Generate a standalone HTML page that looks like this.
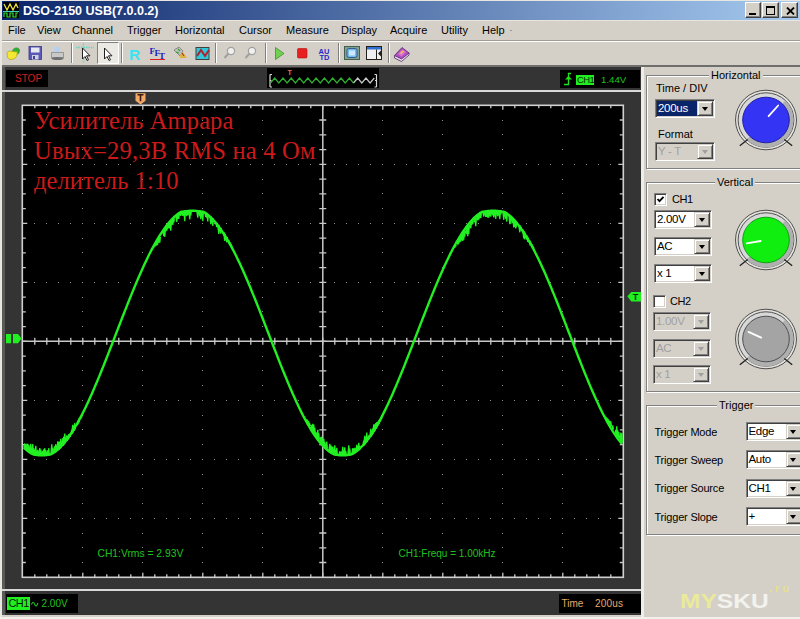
<!DOCTYPE html>
<html><head><meta charset="utf-8">
<style>
*{margin:0;padding:0;box-sizing:border-box}
html,body{width:800px;height:619px;overflow:hidden;background:#d4d0c8;font-family:"Liberation Sans",sans-serif;font-size:11px;color:#000}
.a{position:absolute}
.t{position:absolute;white-space:nowrap;line-height:1}
#title{left:2px;top:1px;width:798px;height:19px;background:linear-gradient(90deg,#0a246a 0%,#a6caf0 100%)}
.tb{position:absolute;top:2px;width:16px;height:16px;background:#d4d0c8;border-top:1px solid #fff;border-left:1px solid #fff;border-right:1px solid #404040;border-bottom:1px solid #404040;box-shadow:inset -1px -1px #808080}
.menu{top:25px;font-size:11px;color:#000}
.sep{position:absolute;top:43px;width:2px;height:20px;border-left:1px solid #808080;border-right:1px solid #fff}
.blk{position:absolute;background:#000}
.combo{position:absolute;height:18px;background:#fff;border-top:1px solid #808080;border-left:1px solid #808080;border-right:1px solid #fff;border-bottom:1px solid #fff;box-shadow:inset 1px 1px #404040,inset -1px -1px #d4d0c8}
.combo .v{position:absolute;left:2px;top:3px;font-size:11.5px;letter-spacing:-0.3px;line-height:11px;white-space:nowrap}
.combo .btn{position:absolute;right:1px;top:1px;width:16px;height:15px;background:#d4d0c8;border-top:1px solid #d4d0c8;border-left:1px solid #d4d0c8;border-right:1px solid #404040;border-bottom:1px solid #404040;box-shadow:inset 1px 1px #fff,inset -1px -1px #808080}
.combo .btn:after{content:"";position:absolute;left:3.5px;top:5px;border-left:3.5px solid transparent;border-right:3.5px solid transparent;border-top:4px solid #000}
.combo.dis{background:#d4d0c8}
.combo.dis .v{color:#a0a0a0}
.combo.dis .btn:after{border-top-color:#a0a0a0}
.grp{position:absolute;border:1px solid #808080;box-shadow:inset 1px 1px #fff,1px 1px #fff}
.grp .gt{position:absolute;top:-7px;background:#d4d0c8;padding:0 2px;font-size:11px;line-height:12px;white-space:nowrap}
.chk{position:absolute;width:13px;height:13px;background:#fff;border-top:1px solid #808080;border-left:1px solid #808080;border-right:1px solid #fff;border-bottom:1px solid #fff;box-shadow:inset 1px 1px #404040,inset -1px -1px #d4d0c8}
</style></head><body>

<!-- window frame -->
<div class="a" style="left:0;top:0;width:800px;height:1px;background:#e8e6e0"></div>
<div class="a" style="left:0;top:0;width:2px;height:619px;background:#e8e6e0"></div>

<!-- title bar -->
<div id="title" class="a"></div>
<svg class="a" style="left:3px;top:2px" width="16" height="16" viewBox="0 0 16 16">
  <rect width="16" height="16" fill="#000"/>
  <polyline points="1,2 4,8 7,2 10,8 13,2 15,6" stroke="#e8e040" stroke-width="1.3" fill="none"/>
  <line x1="0" y1="9.5" x2="16" y2="9.5" stroke="#40d0c0" stroke-width="1"/>
  <polyline points="1,15 1,11 4,11 4,15 7,15 7,11 10,11 10,15 13,15 13,11 15,11" stroke="#30e030" stroke-width="1.2" fill="none"/>
</svg>
<div class="t" style="left:23px;top:5px;font-weight:bold;font-size:12.5px;color:#fff">DSO-2150 USB(7.0.0.2)</div>
<div class="tb" style="left:745px"><div class="a" style="left:3px;top:10px;width:7px;height:2px;background:#000"></div></div>
<div class="tb" style="left:762px;width:17px"><div class="a" style="left:3px;top:3px;width:9px;height:9px;border:1px solid #000;border-top-width:2px"></div></div>
<div class="tb" style="left:781px;width:17px"><svg class="a" style="left:4px;top:4px" width="9" height="8"><path d="M1 0.5L8 7.5M8 0.5L1 7.5" stroke="#000" stroke-width="1.8"/></svg></div>

<!-- menu -->
<div class="a" style="left:2px;top:20px;width:798px;height:1px;background:#e8e6e0"></div>
<div class="t menu" style="left:8px">File</div>
<div class="t menu" style="left:37px">View</div>
<div class="t menu" style="left:72px">Channel</div>
<div class="t menu" style="left:127px">Trigger</div>
<div class="t menu" style="left:175px">Horizontal</div>
<div class="t menu" style="left:239px">Cursor</div>
<div class="t menu" style="left:286px">Measure</div>
<div class="t menu" style="left:341px">Display</div>
<div class="t menu" style="left:390px">Acquire</div>
<div class="t menu" style="left:441px">Utility</div>
<div class="t menu" style="left:482px">Help</div>
<div class="a" style="left:510px;top:30px;width:2px;height:1px;background:#9a9890"></div>
<div class="a" style="left:2px;top:40px;width:798px;height:1px;background:#a09c94"></div>
<div class="a" style="left:2px;top:41px;width:798px;height:1px;background:#fff"></div>

<!-- toolbar -->
<div id="toolbar">
<div class="sep" style="left:71px"></div>
<div class="sep" style="left:121px"></div>
<div class="sep" style="left:215px"></div>
<div class="sep" style="left:265px"></div>
<div class="sep" style="left:338px"></div>
<div class="sep" style="left:388px"></div>
<!-- pressed button -->
<div class="a" style="left:97px;top:42px;width:22px;height:22px;border-top:1px solid #808080;border-left:1px solid #808080;border-right:1px solid #fff;border-bottom:1px solid #fff;background:#ebe9e4"></div>
<svg class="a" style="left:0;top:42px" width="420" height="22" viewBox="0 42 420 22">
  <!-- open folder -->
  <path d="M12.5 50.5c1.5-3 5-3.5 7-1l-0.5 3.5-4 2.5z" fill="#30b030" stroke="#208020" stroke-width="0.6"/>
  <path d="M7 52.5l2.5-1.5 3 .5 5 0.5-1 4.5-2.5 2.5-4 .5-2.5-2z" fill="#f4e830" stroke="#b0a010" stroke-width="0.7"/>
  <!-- save -->
  <rect x="29" y="46.5" width="12.5" height="13" fill="#5a58b8" stroke="#383880" stroke-width="0.8"/>
  <rect x="31" y="47.5" width="8.5" height="5" fill="#e8e8f0"/>
  <rect x="32" y="55" width="6.5" height="4.5" fill="#d0d0e0"/>
  <rect x="33" y="56" width="2" height="3" fill="#4040a0"/>
  <!-- print -->
  <path d="M54 47h6v5h-6z" fill="#b8d0f0"/>
  <path d="M51.5 52.5h12v5.5h-12z" fill="#c8c8c8" stroke="#808080" stroke-width="0.7"/>
  <ellipse cx="57.5" cy="58.5" rx="6" ry="1.6" fill="#707070"/>
  <!-- cursor w/ cross -->
  <path d="M76 47.5h18M83.5 43.5v19" stroke="#60d8c0" stroke-width="1.4" stroke-dasharray="1.5 1"/>
  <path d="M82.5 48v11l2.5-2.5 2 4 1.5-.7-2-4h3.5z" fill="#fff" stroke="#202020" stroke-width="1"/>
  <!-- cursor -->
  <path d="M104.5 48v11l2.5-2.5 2 4 1.5-.7-2-4h3.5z" fill="#fff" stroke="#202020" stroke-width="1"/>
  <!-- R -->
  <text x="129" y="59.7" font-family="Liberation Sans" font-weight="bold" font-size="15.5" fill="#38e4f4">R</text>
  <!-- FFT -->
  <text x="149.5" y="53.5" font-family="Liberation Serif" font-weight="bold" font-size="9" fill="#2020c0">F</text>
  <text x="154.5" y="56" font-family="Liberation Serif" font-weight="bold" font-size="9" fill="#2020c0">F</text>
  <text x="159" y="58.5" font-family="Liberation Serif" font-weight="bold" font-size="9" fill="#2020c0">T</text>
  <path d="M150 59.5h15" stroke="#e02020" stroke-width="1"/>
  <!-- mixed icon -->
  <path d="M174 50l5-3 4 4-3 5z" fill="#c0c0c0" stroke="#606060" stroke-width="0.6"/>
  <path d="M176 52l3 1M178 49l2 2" stroke="#30a030" stroke-width="1.2"/>
  <path d="M180 55l3-3 4 6h-7z" fill="#e0b040"/>
  <path d="M182 53l2 3" stroke="#a02020" stroke-width="1"/>
  <!-- cyan red square -->
  <rect x="196" y="47.5" width="13" height="12" fill="#30c8d8" stroke="#404040" stroke-width="1"/>
  <path d="M197 56l4-6 4 6 4-6" stroke="#b02030" stroke-width="2" fill="none"/>
  <!-- magnifiers -->
  <circle cx="231" cy="51" r="3.6" fill="#f0f0f0" stroke="#a0a0a0" stroke-width="1.2"/>
  <path d="M228.5 53.5l-4 4.5" stroke="#a0a0a0" stroke-width="2"/>
  <circle cx="252" cy="51" r="3.6" fill="#f0f0f0" stroke="#a0a0a0" stroke-width="1.2"/>
  <path d="M249.5 53.5l-4 4.5" stroke="#a0a0a0" stroke-width="2"/>
  <!-- play -->
  <path d="M275.5 47.5l8.5 6-8.5 6z" fill="#70d050" stroke="#409030" stroke-width="0.8"/>
  <!-- stop -->
  <rect x="297.5" y="48.5" width="9.5" height="9.5" rx="1" fill="#e82020" stroke="#b01010" stroke-width="0.6"/>
  <!-- AUTO -->
  <text x="318.5" y="53.5" font-family="Liberation Sans" font-weight="bold" font-size="7.5" fill="#2828c8">AU</text>
  <text x="319.5" y="60" font-family="Liberation Sans" font-weight="bold" font-size="7.5" fill="#2828c8">TD</text>
  <!-- screen -->
  <rect x="344.5" y="46.5" width="15" height="13" fill="#80a090" stroke="#406050" stroke-width="1"/>
  <rect x="347" y="48.5" width="10" height="9" rx="2" fill="#70c0f0" stroke="#304080" stroke-width="0.8"/>
  <rect x="349" y="50.5" width="6" height="5" fill="#d0e8ff"/>
  <!-- window -->
  <rect x="366.5" y="46.5" width="15" height="13" fill="#f0f0f0" stroke="#202020" stroke-width="1"/>
  <rect x="367" y="47" width="14" height="2.5" fill="#3070d0"/>
  <path d="M381 50.5l-3 3 3 3z" fill="#202020"/>
  <path d="M376.5 49.5v10" stroke="#202020" stroke-width="1"/>
  <!-- book -->
  <path d="M394.5 55.5v2.5l7 3.5 7.5-6.5v-2.5" fill="#e8d8f0" stroke="#502868" stroke-width="0.8"/>
  <path d="M394.5 55.5l7.5-8 7 5.5-7.5 6z" fill="#b050c0" stroke="#502868" stroke-width="0.8"/>
  <path d="M398 54l4.5-4.5 3.5 2.5-4.5 4.5z" fill="#e070d0"/>
  <path d="M400.5 53.5l3-2.5" stroke="#f0d040" stroke-width="1.3"/>
</svg>

</div>

<!-- dark scope area -->
<div class="a" style="left:2px;top:65px;width:639px;height:550px;background:#343434;border-left:3px solid #5a5a58"></div>
<!-- top black boxes -->
<div class="blk" style="left:6px;top:70px;width:42px;height:17px"></div>
<div class="t" style="left:15px;top:74px;font-size:10px;color:#d42020">STOP</div>
<div class="blk" style="left:267px;top:68px;width:112px;height:20px"></div>
<svg class="a" style="left:267px;top:68px" width="112" height="20">
  <path d="M3 6.5v12.5M3 6.5h2M3 19h2M3 12.5h1.5M109.5 6.5v12.5M109.5 6.5h-2M109.5 19h-2M109.5 12.5h-1.5" stroke="#d8d8d8" stroke-width="1.2" fill="none"/>
  <polyline points="3.5,15 7.7,10 11.8,15 16.0,10 20.1,15 24.2,10 28.4,15 32.5,10 36.7,15 40.8,10 45.0,15 49.1,10 53.3,15 57.4,10 61.6,15 65.7,10 69.9,15 74.0,10 78.2,15 82.4,10 86.5,15" stroke="#30b030" stroke-width="1.2" fill="none"/>
  <polyline points="86.5,15 90.7,10 94.8,15 99.0,10 103.1,15 107.3,10" stroke="#c8c8c8" stroke-width="1.2" fill="none"/>
  <text x="20.5" y="7" font-size="7" font-weight="bold" fill="#e07848" font-family="Liberation Sans">T</text>
</svg>
<div class="blk" style="left:560px;top:70px;width:80px;height:18px"></div>
<svg class="a" style="left:563px;top:72px" width="10" height="15"><path d="M1 12.5h4.5V1.5h2.5" stroke="#20e020" stroke-width="1.3" fill="none"/><path d="M2 7.5h7l-3.5-3.5z" fill="#20e020"/></svg>
<div class="a" style="left:576px;top:75px;width:18px;height:10px;background:#20f020"></div>
<div class="t" style="left:577px;top:75px;font-size:9.5px;letter-spacing:-0.6px;color:#083008">CH1</div>
<div class="t" style="left:601px;top:74.5px;font-size:9.7px;color:#20c020">1.44V</div>
<!-- separators -->
<div class="a" style="left:2px;top:90px;width:639px;height:2px;background:#d8d8d8"></div>
<div class="a" style="left:2px;top:589px;width:639px;height:2px;background:#d8d8d8"></div>
<!-- trigger pos marker -->
<svg class="a" style="left:135px;top:93px" width="11" height="12"><path d="M0.5 0.3h10v7.5l-5 3.7l-5-3.7z" fill="#f4a868"/><path d="M2.5 1.8h6M5.5 1.8v6.5" stroke="#3a1a10" stroke-width="1.6"/></svg>

<svg width="800" height="619" style="position:absolute;left:0;top:0"><rect x="22.8" y="105.3" width="600" height="472" fill="#000"/><path d="M82 120h1v1h-1zM82 134h1v1h-1zM82 149h1v1h-1zM82 164h1v1h-1zM82 179h1v1h-1zM82 193h1v1h-1zM82 208h1v1h-1zM82 223h1v1h-1zM82 238h1v1h-1zM82 252h1v1h-1zM82 267h1v1h-1zM82 282h1v1h-1zM82 297h1v1h-1zM82 311h1v1h-1zM82 326h1v1h-1zM82 356h1v1h-1zM82 370h1v1h-1zM82 385h1v1h-1zM82 400h1v1h-1zM82 415h1v1h-1zM82 429h1v1h-1zM82 444h1v1h-1zM82 459h1v1h-1zM82 474h1v1h-1zM82 488h1v1h-1zM82 503h1v1h-1zM82 518h1v1h-1zM82 533h1v1h-1zM82 547h1v1h-1zM82 562h1v1h-1zM142 120h1v1h-1zM142 134h1v1h-1zM142 149h1v1h-1zM142 164h1v1h-1zM142 179h1v1h-1zM142 193h1v1h-1zM142 208h1v1h-1zM142 223h1v1h-1zM142 238h1v1h-1zM142 252h1v1h-1zM142 267h1v1h-1zM142 282h1v1h-1zM142 297h1v1h-1zM142 311h1v1h-1zM142 326h1v1h-1zM142 356h1v1h-1zM142 370h1v1h-1zM142 385h1v1h-1zM142 400h1v1h-1zM142 415h1v1h-1zM142 429h1v1h-1zM142 444h1v1h-1zM142 459h1v1h-1zM142 474h1v1h-1zM142 488h1v1h-1zM142 503h1v1h-1zM142 518h1v1h-1zM142 533h1v1h-1zM142 547h1v1h-1zM142 562h1v1h-1zM202 120h1v1h-1zM202 134h1v1h-1zM202 149h1v1h-1zM202 164h1v1h-1zM202 179h1v1h-1zM202 193h1v1h-1zM202 208h1v1h-1zM202 223h1v1h-1zM202 238h1v1h-1zM202 252h1v1h-1zM202 267h1v1h-1zM202 282h1v1h-1zM202 297h1v1h-1zM202 311h1v1h-1zM202 326h1v1h-1zM202 356h1v1h-1zM202 370h1v1h-1zM202 385h1v1h-1zM202 400h1v1h-1zM202 415h1v1h-1zM202 429h1v1h-1zM202 444h1v1h-1zM202 459h1v1h-1zM202 474h1v1h-1zM202 488h1v1h-1zM202 503h1v1h-1zM202 518h1v1h-1zM202 533h1v1h-1zM202 547h1v1h-1zM202 562h1v1h-1zM262 120h1v1h-1zM262 134h1v1h-1zM262 149h1v1h-1zM262 164h1v1h-1zM262 179h1v1h-1zM262 193h1v1h-1zM262 208h1v1h-1zM262 223h1v1h-1zM262 238h1v1h-1zM262 252h1v1h-1zM262 267h1v1h-1zM262 282h1v1h-1zM262 297h1v1h-1zM262 311h1v1h-1zM262 326h1v1h-1zM262 356h1v1h-1zM262 370h1v1h-1zM262 385h1v1h-1zM262 400h1v1h-1zM262 415h1v1h-1zM262 429h1v1h-1zM262 444h1v1h-1zM262 459h1v1h-1zM262 474h1v1h-1zM262 488h1v1h-1zM262 503h1v1h-1zM262 518h1v1h-1zM262 533h1v1h-1zM262 547h1v1h-1zM262 562h1v1h-1zM382 120h1v1h-1zM382 134h1v1h-1zM382 149h1v1h-1zM382 164h1v1h-1zM382 179h1v1h-1zM382 193h1v1h-1zM382 208h1v1h-1zM382 223h1v1h-1zM382 238h1v1h-1zM382 252h1v1h-1zM382 267h1v1h-1zM382 282h1v1h-1zM382 297h1v1h-1zM382 311h1v1h-1zM382 326h1v1h-1zM382 356h1v1h-1zM382 370h1v1h-1zM382 385h1v1h-1zM382 400h1v1h-1zM382 415h1v1h-1zM382 429h1v1h-1zM382 444h1v1h-1zM382 459h1v1h-1zM382 474h1v1h-1zM382 488h1v1h-1zM382 503h1v1h-1zM382 518h1v1h-1zM382 533h1v1h-1zM382 547h1v1h-1zM382 562h1v1h-1zM442 120h1v1h-1zM442 134h1v1h-1zM442 149h1v1h-1zM442 164h1v1h-1zM442 179h1v1h-1zM442 193h1v1h-1zM442 208h1v1h-1zM442 223h1v1h-1zM442 238h1v1h-1zM442 252h1v1h-1zM442 267h1v1h-1zM442 282h1v1h-1zM442 297h1v1h-1zM442 311h1v1h-1zM442 326h1v1h-1zM442 356h1v1h-1zM442 370h1v1h-1zM442 385h1v1h-1zM442 400h1v1h-1zM442 415h1v1h-1zM442 429h1v1h-1zM442 444h1v1h-1zM442 459h1v1h-1zM442 474h1v1h-1zM442 488h1v1h-1zM442 503h1v1h-1zM442 518h1v1h-1zM442 533h1v1h-1zM442 547h1v1h-1zM442 562h1v1h-1zM502 120h1v1h-1zM502 134h1v1h-1zM502 149h1v1h-1zM502 164h1v1h-1zM502 179h1v1h-1zM502 193h1v1h-1zM502 208h1v1h-1zM502 223h1v1h-1zM502 238h1v1h-1zM502 252h1v1h-1zM502 267h1v1h-1zM502 282h1v1h-1zM502 297h1v1h-1zM502 311h1v1h-1zM502 326h1v1h-1zM502 356h1v1h-1zM502 370h1v1h-1zM502 385h1v1h-1zM502 400h1v1h-1zM502 415h1v1h-1zM502 429h1v1h-1zM502 444h1v1h-1zM502 459h1v1h-1zM502 474h1v1h-1zM502 488h1v1h-1zM502 503h1v1h-1zM502 518h1v1h-1zM502 533h1v1h-1zM502 547h1v1h-1zM502 562h1v1h-1zM562 120h1v1h-1zM562 134h1v1h-1zM562 149h1v1h-1zM562 164h1v1h-1zM562 179h1v1h-1zM562 193h1v1h-1zM562 208h1v1h-1zM562 223h1v1h-1zM562 238h1v1h-1zM562 252h1v1h-1zM562 267h1v1h-1zM562 282h1v1h-1zM562 297h1v1h-1zM562 311h1v1h-1zM562 326h1v1h-1zM562 356h1v1h-1zM562 370h1v1h-1zM562 385h1v1h-1zM562 400h1v1h-1zM562 415h1v1h-1zM562 429h1v1h-1zM562 444h1v1h-1zM562 459h1v1h-1zM562 474h1v1h-1zM562 488h1v1h-1zM562 503h1v1h-1zM562 518h1v1h-1zM562 533h1v1h-1zM562 547h1v1h-1zM562 562h1v1h-1zM34 164h1v1h-1zM46 164h1v1h-1zM58 164h1v1h-1zM70 164h1v1h-1zM82 164h1v1h-1zM94 164h1v1h-1zM106 164h1v1h-1zM118 164h1v1h-1zM130 164h1v1h-1zM142 164h1v1h-1zM154 164h1v1h-1zM166 164h1v1h-1zM178 164h1v1h-1zM190 164h1v1h-1zM202 164h1v1h-1zM214 164h1v1h-1zM226 164h1v1h-1zM238 164h1v1h-1zM250 164h1v1h-1zM262 164h1v1h-1zM274 164h1v1h-1zM286 164h1v1h-1zM298 164h1v1h-1zM310 164h1v1h-1zM334 164h1v1h-1zM346 164h1v1h-1zM358 164h1v1h-1zM370 164h1v1h-1zM382 164h1v1h-1zM394 164h1v1h-1zM406 164h1v1h-1zM418 164h1v1h-1zM430 164h1v1h-1zM442 164h1v1h-1zM454 164h1v1h-1zM466 164h1v1h-1zM478 164h1v1h-1zM490 164h1v1h-1zM502 164h1v1h-1zM514 164h1v1h-1zM526 164h1v1h-1zM538 164h1v1h-1zM550 164h1v1h-1zM562 164h1v1h-1zM574 164h1v1h-1zM586 164h1v1h-1zM598 164h1v1h-1zM610 164h1v1h-1zM34 223h1v1h-1zM46 223h1v1h-1zM58 223h1v1h-1zM70 223h1v1h-1zM82 223h1v1h-1zM94 223h1v1h-1zM106 223h1v1h-1zM118 223h1v1h-1zM130 223h1v1h-1zM142 223h1v1h-1zM154 223h1v1h-1zM166 223h1v1h-1zM178 223h1v1h-1zM190 223h1v1h-1zM202 223h1v1h-1zM214 223h1v1h-1zM226 223h1v1h-1zM238 223h1v1h-1zM250 223h1v1h-1zM262 223h1v1h-1zM274 223h1v1h-1zM286 223h1v1h-1zM298 223h1v1h-1zM310 223h1v1h-1zM334 223h1v1h-1zM346 223h1v1h-1zM358 223h1v1h-1zM370 223h1v1h-1zM382 223h1v1h-1zM394 223h1v1h-1zM406 223h1v1h-1zM418 223h1v1h-1zM430 223h1v1h-1zM442 223h1v1h-1zM454 223h1v1h-1zM466 223h1v1h-1zM478 223h1v1h-1zM490 223h1v1h-1zM502 223h1v1h-1zM514 223h1v1h-1zM526 223h1v1h-1zM538 223h1v1h-1zM550 223h1v1h-1zM562 223h1v1h-1zM574 223h1v1h-1zM586 223h1v1h-1zM598 223h1v1h-1zM610 223h1v1h-1zM34 282h1v1h-1zM46 282h1v1h-1zM58 282h1v1h-1zM70 282h1v1h-1zM82 282h1v1h-1zM94 282h1v1h-1zM106 282h1v1h-1zM118 282h1v1h-1zM130 282h1v1h-1zM142 282h1v1h-1zM154 282h1v1h-1zM166 282h1v1h-1zM178 282h1v1h-1zM190 282h1v1h-1zM202 282h1v1h-1zM214 282h1v1h-1zM226 282h1v1h-1zM238 282h1v1h-1zM250 282h1v1h-1zM262 282h1v1h-1zM274 282h1v1h-1zM286 282h1v1h-1zM298 282h1v1h-1zM310 282h1v1h-1zM334 282h1v1h-1zM346 282h1v1h-1zM358 282h1v1h-1zM370 282h1v1h-1zM382 282h1v1h-1zM394 282h1v1h-1zM406 282h1v1h-1zM418 282h1v1h-1zM430 282h1v1h-1zM442 282h1v1h-1zM454 282h1v1h-1zM466 282h1v1h-1zM478 282h1v1h-1zM490 282h1v1h-1zM502 282h1v1h-1zM514 282h1v1h-1zM526 282h1v1h-1zM538 282h1v1h-1zM550 282h1v1h-1zM562 282h1v1h-1zM574 282h1v1h-1zM586 282h1v1h-1zM598 282h1v1h-1zM610 282h1v1h-1zM34 400h1v1h-1zM46 400h1v1h-1zM58 400h1v1h-1zM70 400h1v1h-1zM82 400h1v1h-1zM94 400h1v1h-1zM106 400h1v1h-1zM118 400h1v1h-1zM130 400h1v1h-1zM142 400h1v1h-1zM154 400h1v1h-1zM166 400h1v1h-1zM178 400h1v1h-1zM190 400h1v1h-1zM202 400h1v1h-1zM214 400h1v1h-1zM226 400h1v1h-1zM238 400h1v1h-1zM250 400h1v1h-1zM262 400h1v1h-1zM274 400h1v1h-1zM286 400h1v1h-1zM298 400h1v1h-1zM310 400h1v1h-1zM334 400h1v1h-1zM346 400h1v1h-1zM358 400h1v1h-1zM370 400h1v1h-1zM382 400h1v1h-1zM394 400h1v1h-1zM406 400h1v1h-1zM418 400h1v1h-1zM430 400h1v1h-1zM442 400h1v1h-1zM454 400h1v1h-1zM466 400h1v1h-1zM478 400h1v1h-1zM490 400h1v1h-1zM502 400h1v1h-1zM514 400h1v1h-1zM526 400h1v1h-1zM538 400h1v1h-1zM550 400h1v1h-1zM562 400h1v1h-1zM574 400h1v1h-1zM586 400h1v1h-1zM598 400h1v1h-1zM610 400h1v1h-1zM34 459h1v1h-1zM46 459h1v1h-1zM58 459h1v1h-1zM70 459h1v1h-1zM82 459h1v1h-1zM94 459h1v1h-1zM106 459h1v1h-1zM118 459h1v1h-1zM130 459h1v1h-1zM142 459h1v1h-1zM154 459h1v1h-1zM166 459h1v1h-1zM178 459h1v1h-1zM190 459h1v1h-1zM202 459h1v1h-1zM214 459h1v1h-1zM226 459h1v1h-1zM238 459h1v1h-1zM250 459h1v1h-1zM262 459h1v1h-1zM274 459h1v1h-1zM286 459h1v1h-1zM298 459h1v1h-1zM310 459h1v1h-1zM334 459h1v1h-1zM346 459h1v1h-1zM358 459h1v1h-1zM370 459h1v1h-1zM382 459h1v1h-1zM394 459h1v1h-1zM406 459h1v1h-1zM418 459h1v1h-1zM430 459h1v1h-1zM442 459h1v1h-1zM454 459h1v1h-1zM466 459h1v1h-1zM478 459h1v1h-1zM490 459h1v1h-1zM502 459h1v1h-1zM514 459h1v1h-1zM526 459h1v1h-1zM538 459h1v1h-1zM550 459h1v1h-1zM562 459h1v1h-1zM574 459h1v1h-1zM586 459h1v1h-1zM598 459h1v1h-1zM610 459h1v1h-1zM34 518h1v1h-1zM46 518h1v1h-1zM58 518h1v1h-1zM70 518h1v1h-1zM82 518h1v1h-1zM94 518h1v1h-1zM106 518h1v1h-1zM118 518h1v1h-1zM130 518h1v1h-1zM142 518h1v1h-1zM154 518h1v1h-1zM166 518h1v1h-1zM178 518h1v1h-1zM190 518h1v1h-1zM202 518h1v1h-1zM214 518h1v1h-1zM226 518h1v1h-1zM238 518h1v1h-1zM250 518h1v1h-1zM262 518h1v1h-1zM274 518h1v1h-1zM286 518h1v1h-1zM298 518h1v1h-1zM310 518h1v1h-1zM334 518h1v1h-1zM346 518h1v1h-1zM358 518h1v1h-1zM370 518h1v1h-1zM382 518h1v1h-1zM394 518h1v1h-1zM406 518h1v1h-1zM418 518h1v1h-1zM430 518h1v1h-1zM442 518h1v1h-1zM454 518h1v1h-1zM466 518h1v1h-1zM478 518h1v1h-1zM490 518h1v1h-1zM502 518h1v1h-1zM514 518h1v1h-1zM526 518h1v1h-1zM538 518h1v1h-1zM550 518h1v1h-1zM562 518h1v1h-1zM574 518h1v1h-1zM586 518h1v1h-1zM598 518h1v1h-1zM610 518h1v1h-1z" fill="#8c8c8c"/><path d="M34.8 105.3v3.0M34.8 577.3v-3.0M34.8 337.8v7M46.8 105.3v3.0M46.8 577.3v-3.0M46.8 337.8v7M58.8 105.3v3.0M58.8 577.3v-3.0M58.8 337.8v7M70.8 105.3v3.0M70.8 577.3v-3.0M70.8 337.8v7M82.8 105.3v4.5M82.8 577.3v-4.5M82.8 337.8v7M94.8 105.3v3.0M94.8 577.3v-3.0M94.8 337.8v7M106.8 105.3v3.0M106.8 577.3v-3.0M106.8 337.8v7M118.8 105.3v3.0M118.8 577.3v-3.0M118.8 337.8v7M130.8 105.3v3.0M130.8 577.3v-3.0M130.8 337.8v7M142.8 105.3v4.5M142.8 577.3v-4.5M142.8 337.8v7M154.8 105.3v3.0M154.8 577.3v-3.0M154.8 337.8v7M166.8 105.3v3.0M166.8 577.3v-3.0M166.8 337.8v7M178.8 105.3v3.0M178.8 577.3v-3.0M178.8 337.8v7M190.8 105.3v3.0M190.8 577.3v-3.0M190.8 337.8v7M202.8 105.3v4.5M202.8 577.3v-4.5M202.8 337.8v7M214.8 105.3v3.0M214.8 577.3v-3.0M214.8 337.8v7M226.8 105.3v3.0M226.8 577.3v-3.0M226.8 337.8v7M238.8 105.3v3.0M238.8 577.3v-3.0M238.8 337.8v7M250.8 105.3v3.0M250.8 577.3v-3.0M250.8 337.8v7M262.8 105.3v4.5M262.8 577.3v-4.5M262.8 337.8v7M274.8 105.3v3.0M274.8 577.3v-3.0M274.8 337.8v7M286.8 105.3v3.0M286.8 577.3v-3.0M286.8 337.8v7M298.8 105.3v3.0M298.8 577.3v-3.0M298.8 337.8v7M310.8 105.3v3.0M310.8 577.3v-3.0M310.8 337.8v7M322.8 105.3v4.5M322.8 577.3v-4.5M322.8 337.8v7M334.8 105.3v3.0M334.8 577.3v-3.0M334.8 337.8v7M346.8 105.3v3.0M346.8 577.3v-3.0M346.8 337.8v7M358.8 105.3v3.0M358.8 577.3v-3.0M358.8 337.8v7M370.8 105.3v3.0M370.8 577.3v-3.0M370.8 337.8v7M382.8 105.3v4.5M382.8 577.3v-4.5M382.8 337.8v7M394.8 105.3v3.0M394.8 577.3v-3.0M394.8 337.8v7M406.8 105.3v3.0M406.8 577.3v-3.0M406.8 337.8v7M418.8 105.3v3.0M418.8 577.3v-3.0M418.8 337.8v7M430.8 105.3v3.0M430.8 577.3v-3.0M430.8 337.8v7M442.8 105.3v4.5M442.8 577.3v-4.5M442.8 337.8v7M454.8 105.3v3.0M454.8 577.3v-3.0M454.8 337.8v7M466.8 105.3v3.0M466.8 577.3v-3.0M466.8 337.8v7M478.8 105.3v3.0M478.8 577.3v-3.0M478.8 337.8v7M490.8 105.3v3.0M490.8 577.3v-3.0M490.8 337.8v7M502.8 105.3v4.5M502.8 577.3v-4.5M502.8 337.8v7M514.8 105.3v3.0M514.8 577.3v-3.0M514.8 337.8v7M526.8 105.3v3.0M526.8 577.3v-3.0M526.8 337.8v7M538.8 105.3v3.0M538.8 577.3v-3.0M538.8 337.8v7M550.8 105.3v3.0M550.8 577.3v-3.0M550.8 337.8v7M562.8 105.3v4.5M562.8 577.3v-4.5M562.8 337.8v7M574.8 105.3v3.0M574.8 577.3v-3.0M574.8 337.8v7M586.8 105.3v3.0M586.8 577.3v-3.0M586.8 337.8v7M598.8 105.3v3.0M598.8 577.3v-3.0M598.8 337.8v7M610.8 105.3v3.0M610.8 577.3v-3.0M610.8 337.8v7M22.8 120.0h3.0M622.8 120.0h-3.0M319.3 120.0h7M22.8 134.8h3.0M622.8 134.8h-3.0M319.3 134.8h7M22.8 149.6h3.0M622.8 149.6h-3.0M319.3 149.6h7M22.8 164.3h4.5M622.8 164.3h-4.5M319.3 164.3h7M22.8 179.1h3.0M622.8 179.1h-3.0M319.3 179.1h7M22.8 193.8h3.0M622.8 193.8h-3.0M319.3 193.8h7M22.8 208.6h3.0M622.8 208.6h-3.0M319.3 208.6h7M22.8 223.3h4.5M622.8 223.3h-4.5M319.3 223.3h7M22.8 238.1h3.0M622.8 238.1h-3.0M319.3 238.1h7M22.8 252.8h3.0M622.8 252.8h-3.0M319.3 252.8h7M22.8 267.6h3.0M622.8 267.6h-3.0M319.3 267.6h7M22.8 282.3h4.5M622.8 282.3h-4.5M319.3 282.3h7M22.8 297.1h3.0M622.8 297.1h-3.0M319.3 297.1h7M22.8 311.8h3.0M622.8 311.8h-3.0M319.3 311.8h7M22.8 326.6h3.0M622.8 326.6h-3.0M319.3 326.6h7M22.8 341.3h4.5M622.8 341.3h-4.5M319.3 341.3h7M22.8 356.1h3.0M622.8 356.1h-3.0M319.3 356.1h7M22.8 370.8h3.0M622.8 370.8h-3.0M319.3 370.8h7M22.8 385.6h3.0M622.8 385.6h-3.0M319.3 385.6h7M22.8 400.3h4.5M622.8 400.3h-4.5M319.3 400.3h7M22.8 415.1h3.0M622.8 415.1h-3.0M319.3 415.1h7M22.8 429.8h3.0M622.8 429.8h-3.0M319.3 429.8h7M22.8 444.6h3.0M622.8 444.6h-3.0M319.3 444.6h7M22.8 459.3h4.5M622.8 459.3h-4.5M319.3 459.3h7M22.8 474.1h3.0M622.8 474.1h-3.0M319.3 474.1h7M22.8 488.8h3.0M622.8 488.8h-3.0M319.3 488.8h7M22.8 503.6h3.0M622.8 503.6h-3.0M319.3 503.6h7M22.8 518.3h4.5M622.8 518.3h-4.5M319.3 518.3h7M22.8 533.0h3.0M622.8 533.0h-3.0M319.3 533.0h7M22.8 547.8h3.0M622.8 547.8h-3.0M319.3 547.8h7M22.8 562.5h3.0M622.8 562.5h-3.0M319.3 562.5h7" stroke="#c8c8c8" stroke-width="1.3" fill="none"/><path d="M22.8 341.3H622.8M322.8 105.3V577.3" stroke="#c8c8c8" stroke-width="1.5" fill="none"/><rect x="22.3" y="105.3" width="601.0" height="471.99999999999994" stroke="#d0d0d0" stroke-width="1.6" fill="none"/><polyline points="23.8,447.5 24.8,448.5 25.8,449.4 26.8,450.2 27.8,451.0 28.8,451.8 29.8,452.5 30.8,453.1 31.8,453.7 32.8,454.2 33.8,454.6 34.8,454.7 35.8,454.9 36.8,455.0 37.8,455.1 38.8,455.2 39.8,455.3 40.8,455.3 41.8,455.3 42.8,455.3 43.8,455.3 44.8,455.2 45.8,455.1 46.8,455.0 47.8,454.9 48.8,454.8 49.8,454.6 50.8,454.3 51.8,453.8 52.8,453.2 53.8,452.6 54.8,451.9 55.8,451.2 56.8,450.4 57.8,449.6 58.8,448.7 59.8,447.7 60.8,446.7 61.8,445.7 62.8,444.6 63.8,443.4 64.8,442.2 65.8,441.0 66.8,439.7 67.8,438.4 68.8,437.0 69.8,435.5 70.8,434.1 71.8,432.5 72.8,431.0 73.8,429.4 74.8,427.7 75.8,426.0 76.8,424.3 77.8,422.5 78.8,420.7 79.8,418.8 80.8,416.9 81.8,415.0 82.8,413.0 83.8,411.0 84.8,409.0 85.8,406.9 86.8,404.8 87.8,402.7 88.8,400.5 89.8,398.3 90.8,396.1 91.8,393.9 92.8,391.6 93.8,389.3 94.8,386.9 95.8,384.6 96.8,382.2 97.8,379.8 98.8,377.4 99.8,375.0 100.8,372.5 101.8,370.0 102.8,367.6 103.8,365.1 104.8,362.5 105.8,360.0 106.8,357.5 107.8,354.9 108.8,352.4 109.8,349.8 110.8,347.2 111.8,344.7 112.8,342.1 113.8,339.5 114.8,336.9 115.8,334.3 116.8,331.7 117.8,329.1 118.8,326.5 119.8,324.0 120.8,321.4 121.8,318.8 122.8,316.2 123.8,313.7 124.8,311.1 125.8,308.6 126.8,306.1 127.8,303.5 128.8,301.0 129.8,298.5 130.8,296.1 131.8,293.6 132.8,291.2 133.8,288.8 134.8,286.4 135.8,284.0 136.8,281.6 137.8,279.3 138.8,277.0 139.8,274.7 140.8,272.4 141.8,270.2 142.8,267.9 143.8,265.8 144.8,263.6 145.8,261.5 146.8,259.4 147.8,257.3 148.8,255.3 149.8,253.3 150.8,251.4 151.8,249.4 152.8,247.5 153.8,245.7 154.8,243.9 155.8,242.1 156.8,240.4 157.8,238.7 158.8,237.0 159.8,235.4 160.8,233.8 161.8,232.3 162.8,230.8 163.8,229.4 164.8,228.0 165.8,226.6 166.8,225.3 167.8,224.0 168.8,222.8 169.8,221.6 170.8,220.5 171.8,219.4 172.8,218.4 173.8,217.4 174.8,216.5 175.8,215.6 176.8,214.8 177.8,214.0 178.8,213.3 179.8,212.6 180.8,212.0 181.8,211.8 182.8,211.6 183.8,211.4 184.8,211.3 185.8,211.2 186.8,211.1 187.8,211.0 188.8,210.9 189.8,210.8 190.8,210.8 191.8,210.8 192.8,210.8 193.8,210.8 194.8,210.8 195.8,210.9 196.8,211.0 197.8,211.1 198.8,211.2 199.8,211.3 200.8,211.4 201.8,211.6 202.8,211.8 203.8,212.0 204.8,212.6 205.8,213.3 206.8,214.0 207.8,214.8 208.8,215.6 209.8,216.5 210.8,217.4 211.8,218.4 212.8,219.4 213.8,220.5 214.8,221.6 215.8,222.8 216.8,224.0 217.8,225.3 218.8,226.6 219.8,227.9 220.8,229.3 221.8,230.8 222.8,232.3 223.8,233.8 224.8,235.4 225.8,237.0 226.8,238.6 227.8,240.3 228.8,242.1 229.8,243.9 230.8,245.7 231.8,247.5 232.8,249.4 233.8,251.3 234.8,253.3 235.8,255.3 236.8,257.3 237.8,259.4 238.8,261.5 239.8,263.6 240.8,265.7 241.8,267.9 242.8,270.1 243.8,272.4 244.8,274.6 245.8,276.9 246.8,279.3 247.8,281.6 248.8,284.0 249.8,286.3 250.8,288.7 251.8,291.2 252.8,293.6 253.8,296.1 254.8,298.5 255.8,301.0 256.8,303.5 257.8,306.1 258.8,308.6 259.8,311.1 260.8,313.7 261.8,316.2 262.8,318.8 263.8,321.4 264.8,324.0 265.8,326.5 266.8,329.1 267.8,331.7 268.8,334.3 269.8,336.9 270.8,339.5 271.8,342.1 272.8,344.7 273.8,347.2 274.8,349.8 275.8,352.4 276.8,354.9 277.8,357.5 278.8,360.0 279.8,362.6 280.8,365.1 281.8,367.6 282.8,370.1 283.8,372.5 284.8,375.0 285.8,377.4 286.8,379.8 287.8,382.2 288.8,384.6 289.8,387.0 290.8,389.3 291.8,391.6 292.8,393.9 293.8,396.1 294.8,398.3 295.8,400.5 296.8,402.7 297.8,404.8 298.8,406.9 299.8,409.0 300.8,411.1 301.8,413.1 302.8,415.0 303.8,417.0 304.8,418.8 305.8,420.7 306.8,422.5 307.8,424.3 308.8,426.0 309.8,427.7 310.8,429.4 311.8,431.0 312.8,432.6 313.8,434.1 314.8,435.6 315.8,437.0 316.8,438.4 317.8,439.7 318.8,441.0 319.8,442.3 320.8,443.5 321.8,444.6 322.8,445.7 323.8,446.7 324.8,447.7 325.8,448.7 326.8,449.6 327.8,450.4 328.8,451.2 329.8,451.9 330.8,452.6 331.8,453.2 332.8,453.8 333.8,454.3 334.8,454.6 335.8,454.8 336.8,454.9 337.8,455.0 338.8,455.1 339.8,455.2 340.8,455.3 341.8,455.3 342.8,455.3 343.8,455.3 344.8,455.3 345.8,455.2 346.8,455.1 347.8,455.0 348.8,454.9 349.8,454.7 350.8,454.6 351.8,454.2 352.8,453.7 353.8,453.1 354.8,452.5 355.8,451.8 356.8,451.0 357.8,450.2 358.8,449.4 359.8,448.5 360.8,447.5 361.8,446.5 362.8,445.5 363.8,444.4 364.8,443.2 365.8,442.0 366.8,440.7 367.8,439.4 368.8,438.1 369.8,436.7 370.8,435.3 371.8,433.8 372.8,432.2 373.8,430.7 374.8,429.0 375.8,427.4 376.8,425.7 377.8,423.9 378.8,422.1 379.8,420.3 380.8,418.5 381.8,416.6 382.8,414.6 383.8,412.6 384.8,410.6 385.8,408.6 386.8,406.5 387.8,404.4 388.8,402.3 389.8,400.1 390.8,397.9 391.8,395.7 392.8,393.4 393.8,391.1 394.8,388.8 395.8,386.5 396.8,384.1 397.8,381.7 398.8,379.3 399.8,376.9 400.8,374.5 401.8,372.0 402.8,369.6 403.8,367.1 404.8,364.6 405.8,362.0 406.8,359.5 407.8,357.0 408.8,354.4 409.8,351.9 410.8,349.3 411.8,346.7 412.8,344.1 413.8,341.6 414.8,339.0 415.8,336.4 416.8,333.8 417.8,331.2 418.8,328.6 419.8,326.0 420.8,323.4 421.8,320.9 422.8,318.3 423.8,315.7 424.8,313.2 425.8,310.6 426.8,308.1 427.8,305.6 428.8,303.0 429.8,300.5 430.8,298.1 431.8,295.6 432.8,293.1 433.8,290.7 434.8,288.3 435.8,285.9 436.8,283.5 437.8,281.1 438.8,278.8 439.8,276.5 440.8,274.2 441.8,271.9 442.8,269.7 443.8,267.5 444.8,265.3 445.8,263.2 446.8,261.1 447.8,259.0 448.8,256.9 449.8,254.9 450.8,252.9 451.8,251.0 452.8,249.0 453.8,247.2 454.8,245.3 455.8,243.5 456.8,241.7 457.8,240.0 458.8,238.3 459.8,236.7 460.8,235.1 461.8,233.5 462.8,232.0 463.8,230.5 464.8,229.1 465.8,227.7 466.8,226.3 467.8,225.0 468.8,223.8 469.8,222.6 470.8,221.4 471.8,220.3 472.8,219.2 473.8,218.2 474.8,217.2 475.8,216.3 476.8,215.5 477.8,214.6 478.8,213.9 479.8,213.1 480.8,212.5 481.8,212.0 482.8,211.8 483.8,211.6 484.8,211.4 485.8,211.3 486.8,211.1 487.8,211.0 488.8,210.9 489.8,210.9 490.8,210.8 491.8,210.8 492.8,210.8 493.8,210.8 494.8,210.8 495.8,210.8 496.8,210.9 497.8,211.0 498.8,211.1 499.8,211.2 500.8,211.3 501.8,211.5 502.8,211.6 503.8,211.8 504.8,212.1 505.8,212.7 506.8,213.4 507.8,214.2 508.8,214.9 509.8,215.8 510.8,216.7 511.8,217.6 512.8,218.6 513.8,219.6 514.8,220.7 515.8,221.9 516.8,223.0 517.8,224.3 518.8,225.5 519.8,226.8 520.8,228.2 521.8,229.6 522.8,231.1 523.8,232.6 524.8,234.1 525.8,235.7 526.8,237.3 527.8,239.0 528.8,240.7 529.8,242.4 530.8,244.2 531.8,246.0 532.8,247.9 533.8,249.8 534.8,251.7 535.8,253.7 536.8,255.7 537.8,257.7 538.8,259.8 539.8,261.9 540.8,264.0 541.8,266.2 542.8,268.4 543.8,270.6 544.8,272.8 545.8,275.1 546.8,277.4 547.8,279.7 548.8,282.1 549.8,284.4 550.8,286.8 551.8,289.2 552.8,291.7 553.8,294.1 554.8,296.6 555.8,299.0 556.8,301.5 557.8,304.0 558.8,306.6 559.8,309.1 560.8,311.6 561.8,314.2 562.8,316.8 563.8,319.3 564.8,321.9 565.8,324.5 566.8,327.1 567.8,329.7 568.8,332.2 569.8,334.8 570.8,337.4 571.8,340.0 572.8,342.6 573.8,345.2 574.8,347.8 575.8,350.3 576.8,352.9 577.8,355.5 578.8,358.0 579.8,360.5 580.8,363.1 581.8,365.6 582.8,368.1 583.8,370.6 584.8,373.0 585.8,375.5 586.8,377.9 587.8,380.3 588.8,382.7 589.8,385.1 590.8,387.4 591.8,389.7 592.8,392.0 593.8,394.3 594.8,396.6 595.8,398.8 596.8,401.0 597.8,403.1 598.8,405.3 599.8,407.4 600.8,409.4 601.8,411.5 602.8,413.5 603.8,415.4 604.8,417.3 605.8,419.2 606.8,421.1 607.8,422.9 608.8,424.7 609.8,426.4 610.8,428.1 611.8,429.7 612.8,431.3 613.8,432.9 614.8,434.4 615.8,435.9 616.8,437.3 617.8,438.7 618.8,440.0 619.8,441.3 620.8,442.5 621.8,443.7" stroke="#22f022" stroke-width="2.4" fill="none" stroke-linejoin="round"/><path d="M23.8 447.5L24.8 443.5L25.4 447.5M24.8 448.5L25.8 445.0L26.4 448.5M25.8 449.4L26.8 443.8L27.4 449.4M26.8 450.2L27.8 443.7L28.4 450.2M27.8 451.0L28.8 445.0L29.4 451.0M28.8 451.8L29.8 448.1L30.4 451.8M29.8 452.5L30.8 443.7L31.4 452.5M30.8 453.1L31.8 448.5L32.4 453.1M31.8 453.7L32.8 444.1L33.4 453.7M32.8 454.2L33.8 448.4L34.4 454.2M34.8 454.7L35.8 445.7L36.4 454.7M35.8 454.9L36.8 450.9L37.4 454.9M36.8 455.0L37.8 449.9L38.4 455.0M38.8 455.2L39.8 448.1L40.4 455.2M39.8 455.3L40.8 449.6L41.4 455.3M40.8 455.3L41.8 451.8L42.4 455.3M41.8 455.3L42.8 450.9L43.4 455.3M42.8 455.3L43.8 449.3L44.4 455.3M43.8 455.3L44.8 448.2L45.4 455.3M44.8 455.2L45.8 450.1L46.4 455.2M46.8 455.0L47.8 450.3L48.4 455.0M47.8 454.9L48.8 448.2L49.4 454.9M50.8 454.3L51.8 444.4L52.4 454.3M51.8 453.8L52.8 447.9L53.4 453.8M53.8 452.6L54.8 446.2L55.4 452.6M54.8 451.9L55.8 444.2L56.4 451.9M56.8 450.4L57.8 441.3L58.4 450.4M57.8 449.6L58.8 441.7L59.4 449.6M58.8 448.7L59.8 441.6L60.4 448.7M59.8 447.7L60.8 438.8L61.4 447.7M61.8 445.7L62.8 438.0L63.4 445.7M62.8 444.6L63.8 436.7L64.4 444.6M63.8 443.4L64.8 433.5L65.4 443.4M65.8 441.0L66.8 435.3L67.4 441.0M66.8 439.7L67.8 436.6L68.4 439.7M67.8 438.4L68.8 434.2L69.4 438.4M68.8 437.0L69.8 433.6L70.4 437.0M70.8 434.1L71.8 429.7L72.4 434.1M71.8 432.5L72.8 424.9L73.4 432.5M72.8 431.0L73.8 426.3L74.4 431.0M73.8 429.4L74.8 423.2L75.4 429.4M76.8 424.3L77.8 421.9L78.4 424.3M77.8 422.5L78.8 419.7L79.4 422.5M79.8 418.8L80.8 418.4L81.4 418.8M80.8 416.9L81.8 416.9L82.4 416.9M152.8 247.5L153.8 247.8L154.4 247.5M153.8 245.7L154.8 246.1L155.4 245.7M154.8 243.9L155.8 245.2L156.4 243.9M155.8 242.1L156.8 245.3L157.4 242.1M156.8 240.4L157.8 243.1L158.4 240.4M157.8 238.7L158.8 242.6L159.4 238.7M158.8 237.0L159.8 242.6L160.4 237.0M162.8 230.8L163.8 236.2L164.4 230.8M163.8 229.4L164.8 236.8L165.4 229.4M164.8 228.0L165.8 231.4L166.4 228.0M165.8 226.6L166.8 230.7L167.4 226.6M166.8 225.3L167.8 228.7L168.4 225.3M167.8 224.0L168.8 228.1L169.4 224.0M168.8 222.8L169.8 228.4L170.4 222.8M169.8 221.6L170.8 230.8L171.4 221.6M170.8 220.5L171.8 224.6L172.4 220.5M171.8 219.4L172.8 224.9L173.4 219.4M172.8 218.4L173.8 222.3L174.4 218.4M175.8 215.6L176.8 222.0L177.4 215.6M176.8 214.8L177.8 218.5L178.4 214.8M177.8 214.0L178.8 218.9L179.4 214.0M179.8 212.6L180.8 215.8L181.4 212.6M181.8 211.8L182.8 215.8L183.4 211.8M182.8 211.6L183.8 214.8L184.4 211.6M183.8 211.4L184.8 221.3L185.4 211.4M185.8 211.2L186.8 216.0L187.4 211.2M186.8 211.1L187.8 215.2L188.4 211.1M188.8 210.9L189.8 219.3L190.4 210.9M189.8 210.8L190.8 215.4L191.4 210.8M196.8 211.0L197.8 217.6L198.4 211.0M197.8 211.1L198.8 214.3L199.4 211.1M198.8 211.2L199.8 216.1L200.4 211.2M199.8 211.3L200.8 219.1L201.4 211.3M201.8 211.6L202.8 221.2L203.4 211.6M204.8 212.6L205.8 217.1L206.4 212.6M205.8 213.3L206.8 217.6L207.4 213.3M206.8 214.0L207.8 221.4L208.4 214.0M209.8 216.5L210.8 224.1L211.4 216.5M211.8 218.4L212.8 226.0L213.4 218.4M215.8 222.8L216.8 227.0L217.4 222.8M217.8 225.3L218.8 233.9L219.4 225.3M219.8 227.9L220.8 233.7L221.4 227.9M222.8 232.3L223.8 235.6L224.4 232.3M223.8 233.8L224.8 241.0L225.4 233.8M225.8 237.0L226.8 242.3L227.4 237.0M227.8 240.3L228.8 242.6L229.4 240.3M228.8 242.1L229.8 243.4L230.4 242.1M229.8 243.9L230.8 246.1L231.4 243.9M230.8 245.7L231.8 246.6L232.4 245.7M303.8 417.0L304.8 416.9L305.4 417.0M305.8 420.7L306.8 419.7L307.4 420.7M306.8 422.5L307.8 421.1L308.4 422.5M307.8 424.3L308.8 422.4L309.4 424.3M308.8 426.0L309.8 424.1L310.4 426.0M310.8 429.4L311.8 425.2L312.4 429.4M311.8 431.0L312.8 423.9L313.4 431.0M312.8 432.6L313.8 424.6L314.4 432.6M313.8 434.1L314.8 427.8L315.4 434.1M314.8 435.6L315.8 432.4L316.4 435.6M315.8 437.0L316.8 432.7L317.4 437.0M316.8 438.4L317.8 429.8L318.4 438.4M317.8 439.7L318.8 433.4L319.4 439.7M319.8 442.3L320.8 437.0L321.4 442.3M320.8 443.5L321.8 436.6L322.4 443.5M322.8 445.7L323.8 438.8L324.4 445.7M323.8 446.7L324.8 441.8L325.4 446.7M325.8 448.7L326.8 441.7L327.4 448.7M328.8 451.2L329.8 443.9L330.4 451.2M329.8 451.9L330.8 445.3L331.4 451.9M330.8 452.6L331.8 446.4L332.4 452.6M331.8 453.2L332.8 446.9L333.4 453.2M333.8 454.3L334.8 445.2L335.4 454.3M335.8 454.8L336.8 447.9L337.4 454.8M338.8 455.1L339.8 451.3L340.4 455.1M339.8 455.2L340.8 451.7L341.4 455.2M340.8 455.3L341.8 451.7L342.4 455.3M341.8 455.3L342.8 446.8L343.4 455.3M343.8 455.3L344.8 447.3L345.4 455.3M344.8 455.3L345.8 451.2L346.4 455.3M347.8 455.0L348.8 445.3L349.4 455.0M348.8 454.9L349.8 448.5L350.4 454.9M351.8 454.2L352.8 448.2L353.4 454.2M352.8 453.7L353.8 448.3L354.4 453.7M353.8 453.1L354.8 447.9L355.4 453.1M355.8 451.8L356.8 444.9L357.4 451.8M356.8 451.0L357.8 447.9L358.4 451.0M357.8 450.2L358.8 442.9L359.4 450.2M358.8 449.4L359.8 445.9L360.4 449.4M362.8 445.5L363.8 440.6L364.4 445.5M363.8 444.4L364.8 435.9L365.4 444.4M364.8 443.2L365.8 439.3L366.4 443.2M365.8 442.0L366.8 432.6L367.4 442.0M367.8 439.4L368.8 435.4L369.4 439.4M369.8 436.7L370.8 428.8L371.4 436.7M370.8 435.3L371.8 431.9L372.4 435.3M371.8 433.8L372.8 428.3L373.4 433.8M372.8 432.2L373.8 424.3L374.4 432.2M373.8 430.7L374.8 424.3L375.4 430.7M374.8 429.0L375.8 423.1L376.4 429.0M375.8 427.4L376.8 422.2L377.4 427.4M376.8 425.7L377.8 423.1L378.4 425.7M377.8 423.9L378.8 420.3L379.4 423.9M378.8 422.1L379.8 421.0L380.4 422.1M379.8 420.3L380.8 419.4L381.4 420.3M380.8 418.5L381.8 418.1L382.4 418.5M453.8 247.2L454.8 247.4L455.4 247.2M454.8 245.3L455.8 246.1L456.4 245.3M456.8 241.7L457.8 244.0L458.4 241.7M457.8 240.0L458.8 242.4L459.4 240.0M458.8 238.3L459.8 240.8L460.4 238.3M459.8 236.7L460.8 241.7L461.4 236.7M460.8 235.1L461.8 238.1L462.4 235.1M461.8 233.5L462.8 241.0L463.4 233.5M462.8 232.0L463.8 239.6L464.4 232.0M463.8 230.5L464.8 236.6L465.4 230.5M465.8 227.7L466.8 234.2L467.4 227.7M466.8 226.3L467.8 236.2L468.4 226.3M467.8 225.0L468.8 233.9L469.4 225.0M469.8 222.6L470.8 228.4L471.4 222.6M470.8 221.4L471.8 224.8L472.4 221.4M471.8 220.3L472.8 223.8L473.4 220.3M473.8 218.2L474.8 222.4L475.4 218.2M474.8 217.2L475.8 226.1L476.4 217.2M476.8 215.5L477.8 220.4L478.4 215.5M477.8 214.6L478.8 219.7L479.4 214.6M478.8 213.9L479.8 218.0L480.4 213.9M479.8 213.1L480.8 218.0L481.4 213.1M482.8 211.8L483.8 216.5L484.4 211.8M484.8 211.4L485.8 216.9L486.4 211.4M485.8 211.3L486.8 216.9L487.4 211.3M486.8 211.1L487.8 217.7L488.4 211.1M487.8 211.0L488.8 217.6L489.4 211.0M488.8 210.9L489.8 215.8L490.4 210.9M489.8 210.9L490.8 216.7L491.4 210.9M490.8 210.8L491.8 214.0L492.4 210.8M491.8 210.8L492.8 215.4L493.4 210.8M492.8 210.8L493.8 217.5L494.4 210.8M494.8 210.8L495.8 218.8L496.4 210.8M496.8 210.9L497.8 216.2L498.4 210.9M498.8 211.1L499.8 219.1L500.4 211.1M499.8 211.2L500.8 214.5L501.4 211.2M502.8 211.6L503.8 219.8L504.4 211.6M504.8 212.1L505.8 218.8L506.4 212.1M505.8 212.7L506.8 221.6L507.4 212.7M508.8 214.9L509.8 224.2L510.4 214.9M509.8 215.8L510.8 223.6L511.4 215.8M510.8 216.7L511.8 219.9L512.4 216.7M511.8 217.6L512.8 223.1L513.4 217.6M512.8 218.6L513.8 227.4L514.4 218.6M513.8 219.6L514.8 227.0L515.4 219.6M514.8 220.7L515.8 228.5L516.4 220.7M515.8 221.9L516.8 224.9L517.4 221.9M518.8 225.5L519.8 232.3L520.4 225.5M519.8 226.8L520.8 230.3L521.4 226.8M521.8 229.6L522.8 233.1L523.4 229.6M522.8 231.1L523.8 238.5L524.4 231.1M523.8 232.6L524.8 239.4L525.4 232.6M525.8 235.7L526.8 239.5L527.4 235.7M526.8 237.3L527.8 241.9L528.4 237.3M528.8 240.7L529.8 243.7L530.4 240.7M529.8 242.4L530.8 243.7L531.4 242.4M530.8 244.2L531.8 246.0L532.4 244.2M531.8 246.0L532.8 246.8L533.4 246.0M532.8 247.9L533.8 247.9L534.4 247.9M604.8 417.3L605.8 417.1L606.4 417.3M605.8 419.2L606.8 418.2L607.4 419.2M606.8 421.1L607.8 419.6L608.4 421.1M607.8 422.9L608.8 420.8L609.4 422.9M608.8 424.7L609.8 420.8L610.4 424.7M609.8 426.4L610.8 421.3L611.4 426.4M611.8 429.7L612.8 425.4L613.4 429.7M614.8 434.4L615.8 429.8L616.4 434.4M615.8 435.9L616.8 426.2L617.4 435.9M616.8 437.3L617.8 430.2L618.4 437.3M617.8 438.7L618.8 432.0L619.4 438.7M619.8 441.3L620.8 432.5L621.4 441.3M620.8 442.5L621.8 433.3L622.4 442.5" stroke="#22f022" stroke-width="1.3" fill="none"/></svg>

<!-- scope texts -->
<div class="t" style="left:34px;top:109px;font-family:'Liberation Serif',serif;font-size:24.5px;letter-spacing:0.1px;color:#cc1a1a">Усилитель Ampapa</div>
<div class="t" style="left:34px;top:139px;font-family:'Liberation Serif',serif;font-size:24.5px;letter-spacing:0.23px;color:#cc1a1a">Uвых=29,3В RMS на 4 Ом</div>
<div class="t" style="left:34px;top:169px;font-family:'Liberation Serif',serif;font-size:24.5px;letter-spacing:0.1px;color:#cc1a1a">делитель 1:10</div>
<div class="t" style="left:97.5px;top:548.5px;font-size:10.3px;color:#20c020">CH1:Vrms = 2.93V</div>
<div class="t" style="left:398.5px;top:548.5px;font-size:10px;color:#20c020">CH1:Frequ = 1.00kHz</div>

<!-- channel marker left -->
<svg class="a" style="left:5px;top:333px" width="18" height="11"><path d="M1 1h5v9.3h-5z M8 1h5l3.5 4.6-3.5 4.7h-5z" fill="#20f020"/></svg>
<!-- trigger level marker right -->
<svg class="a" style="left:627px;top:291px" width="15" height="11"><path d="M0.3 5.2l4-4.2h9.7v9.5h-9.7z" fill="#20f020"/><text x="5.8" y="8.8" font-size="9" font-weight="bold" fill="#043004" font-family="Liberation Sans">T</text></svg>

<!-- bottom black boxes -->
<div class="blk" style="left:6px;top:594px;width:72px;height:19px"></div>
<div class="a" style="left:7px;top:597px;width:23px;height:13px;background:#20f020"></div>
<div class="t" style="left:8.5px;top:598px;font-size:11px;letter-spacing:-0.6px;color:#062006">CH1</div>
<svg class="a" style="left:30px;top:599px" width="10" height="10"><path d="M1.5 5.5C2.5 2.5 3.5 2.5 4.5 5S6.5 8 8 4" stroke="#20c020" stroke-width="1.1" fill="none"/></svg>
<div class="t" style="left:41.5px;top:598.7px;font-size:10px;color:#20c020">2.00V</div>
<div class="blk" style="left:559px;top:594px;width:82px;height:19px"></div>
<div class="t" style="left:561.5px;top:599.2px;font-size:10px;color:#e8a868">Time</div>
<div class="t" style="left:595px;top:599.2px;font-size:10px;letter-spacing:0.2px;color:#e8a868">200us</div>

<!-- divider -->
<div class="a" style="left:641px;top:65px;width:3px;height:552px;background:#eeede8"></div>
<div class="a" style="left:2px;top:65px;width:798px;height:2px;background:#6e6e6c"></div>


<!-- right panel -->
<div class="grp" style="left:646px;top:75px;width:160px;height:94px"><div class="gt" style="left:62px">Horizontal</div></div>
<div class="t" style="left:656px;top:83px;">Time / DIV</div>
<div class="combo" style="left:655px;top:99px;width:60px;height:19px"><div class="a" style="left:1px;top:1px;width:40px;height:15px;background:#0a246a"></div><div class="v" style="color:#fff">200us</div><div class="btn"></div></div>
<div class="t" style="left:658px;top:128.7px;">Format</div>
<div class="combo dis" style="left:655px;top:142px;width:60px;height:19px"><div class="v">Y - T</div><div class="btn"></div></div>
<svg class="a" style="left:726.4px;top:80px" width="80" height="80" viewBox="726.4 80 80 80">
<ellipse cx="766.4" cy="120" rx="30.5" ry="29.8" fill="#e4e2dc" stroke="#505050" stroke-width="1"/>
<ellipse cx="766.4" cy="120" rx="27.9" ry="27.2" fill="#d8d8d8" stroke="#505050" stroke-width="1"/>
<path d="M785.9 100.5A27.5 27.5 0 0 1 746.9 139.5z" fill="#b0b0b0"/>
<path d="M748.1 139.4L740.1999999999999 145.7M784.6999999999999 139.4L792.6 145.7" stroke="#202020" stroke-width="1.3"/>
<ellipse cx="766.4" cy="120" rx="23.3" ry="22.8" fill="#3434f4" stroke="#2020a0" stroke-width="1"/>
<path d="M769 116.2L778.6 105.5" stroke="#fff" stroke-width="1.8" stroke-linecap="round"/>
</svg>
<div class="grp" style="left:646px;top:182px;width:160px;height:210px"><div class="gt" style="left:68px">Vertical</div></div>
<div class="chk" style="left:654px;top:193px"><svg class="a" style="left:1px;top:1px" width="9" height="9"><path d="M1.5 4l2 2.2 4-4.4" stroke="#000" stroke-width="1.8" fill="none"/></svg></div>
<div class="t" style="left:672px;top:194px;letter-spacing:-0.5px">CH1</div>
<div class="combo" style="left:654px;top:210px;width:58px;height:19px"><div class="v">2.00V</div><div class="btn"></div></div>
<div class="combo" style="left:654px;top:237px;width:58px;height:19px"><div class="v">AC</div><div class="btn"></div></div>
<div class="combo" style="left:654px;top:264px;width:58px;height:19px"><div class="v">x 1</div><div class="btn"></div></div>
<div class="chk" style="left:653px;top:295px"></div>
<div class="t" style="left:670px;top:296px;letter-spacing:-0.5px">CH2</div>
<div class="combo dis" style="left:653px;top:312px;width:58px;height:19px"><div class="v">1.00V</div><div class="btn"></div></div>
<div class="combo dis" style="left:653px;top:339px;width:58px;height:19px"><div class="v">AC</div><div class="btn"></div></div>
<div class="combo dis" style="left:653px;top:365px;width:58px;height:19px"><div class="v">x 1</div><div class="btn"></div></div>
<svg class="a" style="left:726.2px;top:199.5px" width="80" height="80" viewBox="726.2 199.5 80 80">
<ellipse cx="766.2" cy="239.5" rx="30.5" ry="29.8" fill="#e4e2dc" stroke="#505050" stroke-width="1"/>
<ellipse cx="766.2" cy="239.5" rx="27.9" ry="27.2" fill="#d8d8d8" stroke="#505050" stroke-width="1"/>
<path d="M785.7 220.0A27.5 27.5 0 0 1 746.7 259.0z" fill="#b0b0b0"/>
<path d="M747.9000000000001 258.9L740.0 265.2M784.5 258.9L792.4000000000001 265.2" stroke="#202020" stroke-width="1.3"/>
<ellipse cx="766.2" cy="239.5" rx="23.3" ry="22.8" fill="#10ee10" stroke="#10a010" stroke-width="1"/>
<path d="M747 242.8L760.8 240.5" stroke="#fff" stroke-width="1.8" stroke-linecap="round"/>
</svg>
<svg class="a" style="left:726.2px;top:299.3px" width="80" height="80" viewBox="726.2 299.3 80 80">
<ellipse cx="766.2" cy="339.3" rx="30.5" ry="29.8" fill="#e4e2dc" stroke="#505050" stroke-width="1"/>
<ellipse cx="766.2" cy="339.3" rx="27.9" ry="27.2" fill="#d8d8d8" stroke="#505050" stroke-width="1"/>
<path d="M785.7 319.8A27.5 27.5 0 0 1 746.7 358.8z" fill="#b0b0b0"/>
<path d="M747.9000000000001 358.7L740.0 365.0M784.5 358.7L792.4000000000001 365.0" stroke="#202020" stroke-width="1.3"/>
<ellipse cx="766.2" cy="339.3" rx="23.3" ry="22.8" fill="#a4a4a4" stroke="#505050" stroke-width="1"/>
<path d="M748.7 332.2L761.4 337.9" stroke="#fff" stroke-width="1.8" stroke-linecap="round"/>
</svg>
<div class="grp" style="left:646px;top:405px;width:160px;height:130px"><div class="gt" style="left:70px">Trigger</div></div>
<div class="t" style="left:654.5px;top:426.5px;letter-spacing:-0.2px">Trigger Mode</div>
<div class="combo" style="left:745.5px;top:422px;width:58px;height:19px"><div class="v">Edge</div><div class="btn"></div></div>
<div class="t" style="left:654.5px;top:454.5px;letter-spacing:-0.2px">Trigger Sweep</div>
<div class="combo" style="left:745.5px;top:450px;width:58px;height:19px"><div class="v">Auto</div><div class="btn"></div></div>
<div class="t" style="left:654.5px;top:483px;letter-spacing:-0.2px">Trigger Source</div>
<div class="combo" style="left:745.5px;top:478.5px;width:58px;height:19px"><div class="v">CH1</div><div class="btn"></div></div>
<div class="t" style="left:654.5px;top:511.5px;letter-spacing:-0.2px">Trigger Slope</div>
<div class="combo" style="left:745.5px;top:507px;width:58px;height:19px"><div class="v">+</div><div class="btn"></div></div>
<div class="t" style="left:680px;top:591.5px;font-size:19.5px;font-weight:bold;color:#f2f2ee;transform:scaleX(1.26);transform-origin:0 0"><span style="color:#eaea98">MY</span>SKU</div>
<div class="t" style="left:769px;top:583px;font-size:11px;font-weight:bold;letter-spacing:3px;color:#e6e088">.ru</div>
<div class="a" style="left:0;top:617px;width:800px;height:2px;background:#f2f1ec"></div>

</body></html>
